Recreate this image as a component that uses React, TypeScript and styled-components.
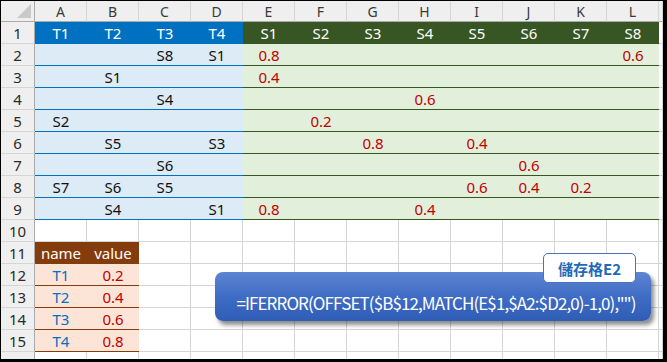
import React from 'react';
import styled, { createGlobalStyle, css } from 'styled-components';

const GlobalStyle = createGlobalStyle`
    html, body {
        margin: 0;
        padding: 0;
        background: #000;
    }
`;

type Kind =
    | 'blank'
    | 'tHead'
    | 'sHead'
    | 'tBody'
    | 'sBody'
    | 'nameHead'
    | 'name'
    | 'value';

const COLS = ['A', 'B', 'C', 'D', 'E', 'F', 'G', 'H', 'I', 'J', 'K', 'L', 'M'];

const kindStyles: Record<Kind, ReturnType<typeof css>> = {
    blank: css`
        background: #fff;
        border-right: 1px solid #d4d4d4;
        border-bottom: 1px solid #d4d4d4;
    `,
    tHead: css`
        background: #0070c0;
        color: #fff;
    `,
    sHead: css`
        background: #375623;
        color: #fff;
    `,
    tBody: css`
        background: #ddebf7;
        color: #111;
        border-bottom: 1px solid #0070c0;
    `,
    sBody: css`
        background: #e2efda;
        color: #c00000;
        border-bottom: 1px solid #375623;
    `,
    nameHead: css`
        background: #843c0c;
        color: #fff;
    `,
    name: css`
        background: #fce4d6;
        color: #0070c0;
        border-bottom: 1px solid #843c0c;
    `,
    value: css`
        background: #fce4d6;
        color: #c00000;
        border-bottom: 1px solid #843c0c;
    `,
};

const Frame = styled.div`
    position: relative;
    width: 662px;
    height: 358px;
    margin: 1px 0 0 1px;
    background: #fff;
    overflow: hidden;
`;

const Sheet = styled.div`
    display: grid;
    grid-template-columns: 34px repeat(12, 52px) 4px;
    grid-template-rows: 21px;
    grid-auto-rows: 22px;
    font-family: 'Noto Sans', 'Noto Sans CJK TC', sans-serif;
    font-size: 15px;
`;

const Corner = styled.div`
    display: flex;
    align-items: flex-end;
    justify-content: flex-end;
    padding: 0 3px 3px 0;
    background: #efefef;
    border-right: 1px solid #ababab;
    border-bottom: 1px solid #ababab;
`;

const SelectAll = styled.span`
    width: 0;
    height: 0;
    border-left: 14px solid transparent;
    border-bottom: 14px solid #c9c9c9;
`;

const ColHead = styled.div`
    display: flex;
    align-items: center;
    justify-content: center;
    background: #efefef;
    color: #3a3a3a;
    font-size: 14px;
    border-right: 1px solid #d5d5d5;
    border-bottom: 1px solid #ababab;
`;

const RowHead = styled.div`
    display: flex;
    align-items: center;
    justify-content: center;
    background: #efefef;
    color: #2a2a2a;
    border-right: 1px solid #ababab;
    border-bottom: 1px solid #d5d5d5;
`;

const Cell = styled.div<{ $kind: Kind }>`
    box-sizing: border-box;
    display: flex;
    align-items: center;
    justify-content: center;
    white-space: nowrap;
    ${({ $kind }) => kindStyles[$kind]}
`;

const Callout = styled.div`
    position: absolute;
    left: 214px;
    top: 271px;
    width: 436px;
    height: 49px;
    box-sizing: border-box;
    display: flex;
    align-items: center;
    justify-content: center;
    padding: 12px 0 0 6px;
    border-radius: 8px;
    background: linear-gradient(180deg, #5d85d2 0%, #3f6cc4 50%, #2f5db6 100%);
    box-shadow: 3px 4px 4px rgba(0, 0, 0, 0.45);
    color: #fff;
    font-family: 'Noto Sans CJK TC', 'Noto Sans', sans-serif;
    font-size: 17px;
    letter-spacing: -0.9px;
    white-space: nowrap;
`;

const Label = styled.div`
    position: absolute;
    left: 328px;
    top: -19px;
    width: 93px;
    height: 30px;
    box-sizing: border-box;
    display: flex;
    align-items: center;
    justify-content: center;
    background: #fff;
    border: 1px solid #4a72b8;
    border-radius: 5px;
    color: #1f6ab8;
    font-family: 'Noto Sans CJK TC', sans-serif;
    font-size: 15px;
    font-weight: 700;
    letter-spacing: 0;
`;

// upper table: T columns (A-D) hold S labels, S columns (E-L) hold values
const upper: string[][] = [
    ['', '', 'S8', 'S1', '0.8', '', '', '', '', '', '', '0.6'],
    ['', 'S1', '', '', '0.4', '', '', '', '', '', '', ''],
    ['', '', 'S4', '', '', '', '', '0.6', '', '', '', ''],
    ['S2', '', '', '', '', '0.2', '', '', '', '', '', ''],
    ['', 'S5', '', 'S3', '', '', '0.8', '', '0.4', '', '', ''],
    ['', '', 'S6', '', '', '', '', '', '', '0.6', '', ''],
    ['S7', 'S6', 'S5', '', '', '', '', '', '0.6', '0.4', '0.2', ''],
    ['', 'S4', '', 'S1', '0.8', '', '', '0.4', '', '', '', ''],
];

const lookup = [
    ['T1', '0.2'],
    ['T2', '0.4'],
    ['T3', '0.6'],
    ['T4', '0.8'],
];

type RowDef = { kind: Kind; text?: string }[];

function buildRows(): RowDef[] {
    const blankRow = (): RowDef => COLS.map(() => ({ kind: 'blank' as Kind }));
    const rows: RowDef[] = [];

    rows.push(
        COLS.map((_, i) => {
            if (i < 4) return { kind: 'tHead' as Kind, text: `T${i + 1}` };
            if (i < 12) return { kind: 'sHead' as Kind, text: `S${i - 3}` };
            return { kind: 'blank' as Kind };
        }),
    );

    upper.forEach((r) => {
        rows.push(
            COLS.map((_, i) => {
                if (i < 4) return { kind: 'tBody' as Kind, text: r[i] };
                if (i < 12) return { kind: 'sBody' as Kind, text: r[i] };
                return { kind: 'blank' as Kind };
            }),
        );
    });

    rows.push(blankRow());

    const head = blankRow();
    head[0] = { kind: 'nameHead', text: 'name' };
    head[1] = { kind: 'nameHead', text: 'value' };
    rows.push(head);

    lookup.forEach(([n, v]) => {
        const r = blankRow();
        r[0] = { kind: 'name', text: n };
        r[1] = { kind: 'value', text: v };
        rows.push(r);
    });

    rows.push(blankRow());
    return rows;
}

export default function App() {
    const rows = buildRows();

    return (
        <>
            <GlobalStyle />
            <Frame>
                <Sheet>
                    <Corner>
                        <SelectAll />
                    </Corner>
                    {COLS.map((c, i) => (
                        <ColHead key={c}>{i < 12 ? c : ''}</ColHead>
                    ))}
                    {rows.map((row, r) => (
                        <React.Fragment key={r}>
                            <RowHead>{r + 1}</RowHead>
                            {row.map((cell, c) => (
                                <Cell key={c} $kind={cell.kind}>
                                    {cell.text}
                                </Cell>
                            ))}
                        </React.Fragment>
                    ))}
                </Sheet>
                <Callout>
                    <Label>儲存格E2</Label>
                    =IFERROR(OFFSET($B$12,MATCH(E$1,$A2:$D2,0)-1,0),"")
                </Callout>
            </Frame>
        </>
    );
}
